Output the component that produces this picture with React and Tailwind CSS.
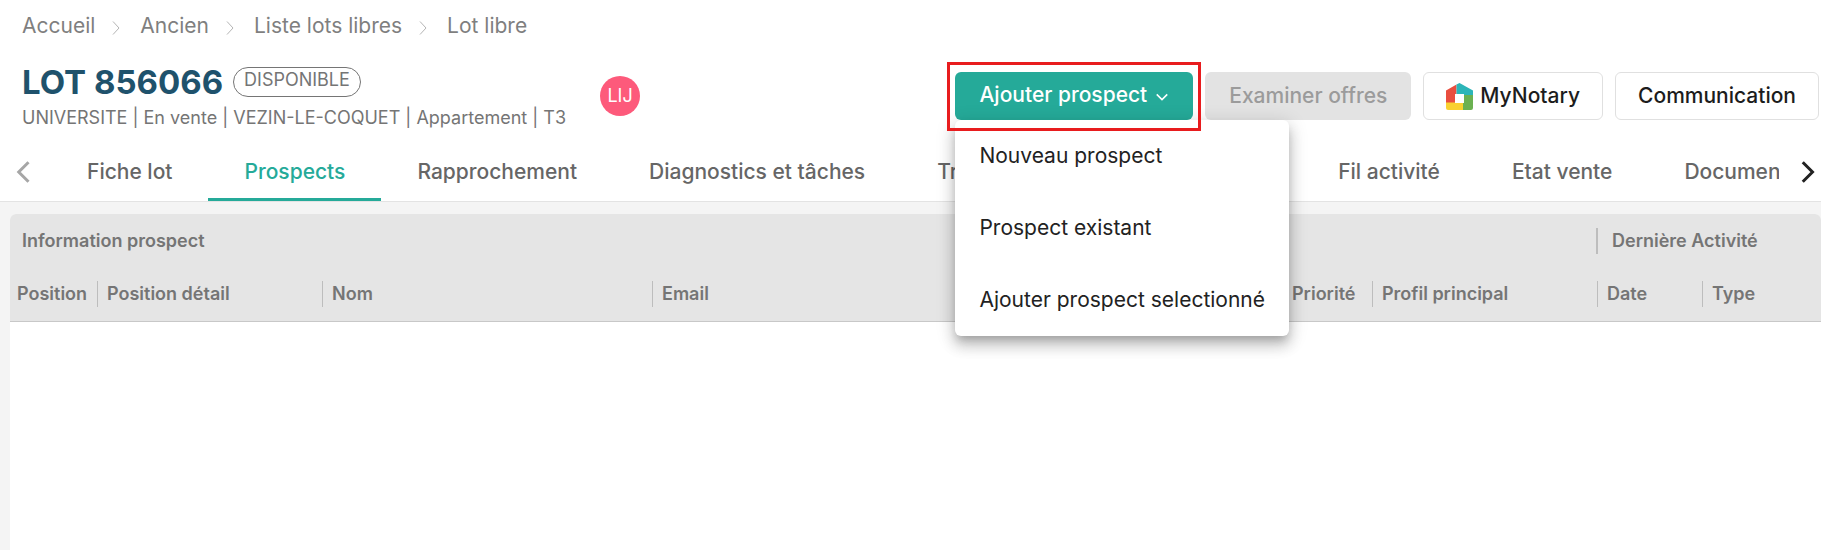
import React, { useState } from "react";
import { clsx } from "clsx";

const breadcrumbs = ["Accueil", "Ancien", "Liste lots libres", "Lot libre"];

const tabs = [
  { label: "Fiche lot" },
  { label: "Prospects" },
  { label: "Rapprochement" },
  { label: "Diagnostics et tâches" },
  { label: "Tr", wide: true },
  { label: "Fil activité" },
  { label: "Etat vente" },
  { label: "Documents" },
];

const menuItems = ["Nouveau prospect", "Prospect existant", "Ajouter prospect selectionné"];

const columns = [
  { label: "Position", width: "w-[88px]" },
  { label: "Position détail", width: "w-[225px]" },
  { label: "Nom", width: "w-[330px]" },
  { label: "Email", width: "w-[630px]" },
  { label: "Priorité", width: "w-[90px]" },
  { label: "Profil principal", width: "w-[225px]" },
  { label: "Date", width: "w-[105px]" },
  { label: "Type", width: "w-auto" },
];

const Chevron = ({ d, className, stroke = 1, size = 16 }) => (
  <svg
    width={size}
    height={size}
    viewBox="0 0 16 16"
    fill="none"
    stroke="currentColor"
    strokeWidth={stroke}
    className={className}
    aria-hidden="true"
  >
    <path d={d} />
  </svg>
);

const MyNotaryLogo = () => (
  <svg width="27" height="27" viewBox="0 0 27 27" aria-hidden="true">
    <path d="M0 7.5 L10.5 1.5 V11 H9 V20 H0 Z" fill="#e94e3f" />
    <path d="M10.5 1.5 L13.5 0 L27 7.5 V12 H18 V11 H10.5 Z" fill="#2cb5b8" />
    <path d="M18 12 H27 V25 Q27 27 25 27 H17 V20 H18 Z" fill="#6bb151" />
    <path d="M0 19.5 H17 V27 H2 Q0 27 0 25 Z" fill="#f9d130" />
    <rect x="9" y="11" width="9" height="9" fill="#fff" />
  </svg>
);

const Breadcrumb = () => (
  <nav aria-label="Fil d'Ariane" className="px-[22px] pt-3">
    <ol className="flex items-center text-[21px] leading-7 text-[#7f7f7f]">
      {breadcrumbs.map((item, i) => (
        <li key={item} className="flex items-center">
          {i > 0 && (
            <Chevron d="M5 1.5 L11 8 L5 14.5" className="mt-1 mr-4 ml-[13px] text-[#b5b5b5]" />
          )}
          <a href="#">{item}</a>
        </li>
      ))}
    </ol>
  </nav>
);

const AddProspect = () => {
  const [open, setOpen] = useState(true);

  return (
    <div className="relative">
      <button
        type="button"
        aria-expanded={open}
        onClick={() => setOpen(!open)}
        className="flex h-12 items-center gap-2 rounded-md bg-[#25aa99] px-6 pb-0.5 text-[21px] font-medium text-white"
      >
        Ajouter prospect
        <Chevron d="M2 5 L8 11 L14 5" stroke={1.8} size={14} className="mt-1" />
      </button>
      {open && (
        <ul className="absolute top-full left-0 z-10 rounded-md bg-white shadow-[0_6px_8px_-3px_rgba(0,0,0,0.2),0_10px_14px_1px_rgba(0,0,0,0.14),0_4px_18px_3px_rgba(0,0,0,0.12)]">
          {menuItems.map((item) => (
            <li key={item}>
              <button
                type="button"
                className="flex h-[72px] w-full items-center px-6 text-left text-[21px] whitespace-nowrap text-[#222]"
              >
                {item}
              </button>
            </li>
          ))}
        </ul>
      )}
      <div className="pointer-events-none absolute -inset-x-2 -top-2.5 -bottom-[11px] z-20 border-3 border-[#e81c1e]" />
    </div>
  );
};

const LotHeader = () => (
  <header className="flex items-start justify-between pr-0.5 pb-2 pl-[22px]">
    <div className="flex items-start gap-[34px] pt-[22px]">
      <div>
        <div className="flex items-center gap-2.5">
          <h1 className="text-[33px] leading-10 font-bold text-[#1f526c]">LOT 856066</h1>
          <span className="flex h-[30px] items-center rounded-full border border-[#757575] px-2.5 pb-1 text-lg text-[#757575]">
            DISPONIBLE
          </span>
        </div>
        <p className="text-lg leading-8 text-[#757575]">
          UNIVERSITE | En vente | VEZIN-LE-COQUET | Appartement | T3
        </p>
      </div>
      <div className="mt-3.5 flex size-10 items-center justify-center rounded-full bg-[#fd5a7b] text-lg text-white">
        LIJ
      </div>
    </div>
    <div className="flex gap-3 pt-8">
      <AddProspect />
      <button
        type="button"
        disabled
        className="h-12 rounded-md bg-[#e3e3e3] px-6 text-[21px] font-medium text-[#9b9b9b]"
      >
        Examiner offres
      </button>
      <button
        type="button"
        className="flex h-12 items-center gap-[7px] rounded-md border border-[#e0e0e0] px-[22px] text-[21px] font-medium text-[#1c1c1c]"
      >
        <MyNotaryLogo />
        MyNotary
      </button>
      <button
        type="button"
        className="h-12 rounded-md border border-[#e0e0e0] px-[22px] text-[21px] font-medium text-[#1c1c1c]"
      >
        Communication
      </button>
    </div>
  </header>
);

const TabBar = () => {
  const [active, setActive] = useState("Prospects");

  return (
    <div className="flex border-b border-[#e3e3e3]">
      <button type="button" aria-label="Précédent" className="flex w-[51px] shrink-0 items-center pl-3 text-[#a6a6a6]">
        <Chevron d="M11 1.5 L4.5 8 L11 14.5" stroke={2} size={24} />
      </button>
      <div role="tablist" className="flex min-w-0 flex-1 overflow-hidden">
        {tabs.map((tab) => (
          <button
            key={tab.label}
            type="button"
            role="tab"
            aria-selected={active === tab.label}
            onClick={() => setActive(tab.label)}
            className={clsx(
              "h-[59px] shrink-0 border-b-3 px-9 pt-[3px] text-left text-[21px] font-medium whitespace-nowrap",
              tab.wide && "w-[401px]",
              active === tab.label
                ? "border-[#25aa99] text-[#25aa99]"
                : "border-transparent text-[#666]"
            )}
          >
            {tab.label}
          </button>
        ))}
      </div>
      <button type="button" aria-label="Suivant" className="flex w-[42px] shrink-0 items-center justify-end pr-px text-[#222]">
        <Chevron d="M4.5 1.5 L11 8 L4.5 14.5" stroke={2} size={24} />
      </button>
    </div>
  );
};

const ProspectTable = () => (
  <div className="flex flex-1 flex-col bg-[#f4f4f4] pt-3 pl-2.5">
    <div className="flex-1 overflow-hidden rounded-t-md bg-white">
      <table className="w-full table-fixed text-left text-lg leading-[26px] text-[#757575]">
        <colgroup>
          {columns.map((col) => (
            <col key={col.label} className={col.width} />
          ))}
        </colgroup>
        <thead className="bg-[#e5e5e5]">
          <tr className="h-[53px]">
            <th colSpan={6} className="p-0 font-semibold">
              <div className="border-r-2 border-[#bdbdbd] pl-3">Information prospect</div>
            </th>
            <th colSpan={2} className="p-0 pl-3.5 font-semibold">
              Dernière Activité
            </th>
          </tr>
          <tr className="h-[54px] border-b border-[#c8c8c8]">
            {columns.map((col, i) => (
              <th key={col.label} className="p-0 font-semibold">
                <div
                  className={clsx(
                    "whitespace-nowrap",
                    i === 0 ? "pl-[7px]" : "pl-[9px]",
                    i < columns.length - 1 && "border-r border-[#bdbdbd]"
                  )}
                >
                  {col.label}
                </div>
              </th>
            ))}
          </tr>
        </thead>
      </table>
    </div>
  </div>
);

const App = () => {
  return (
    <div className="flex min-h-screen flex-col overflow-hidden bg-white font-['Inter',sans-serif]">
      <Breadcrumb />
      <LotHeader />
      <TabBar />
      <ProspectTable />
    </div>
  );
};

export default App;
